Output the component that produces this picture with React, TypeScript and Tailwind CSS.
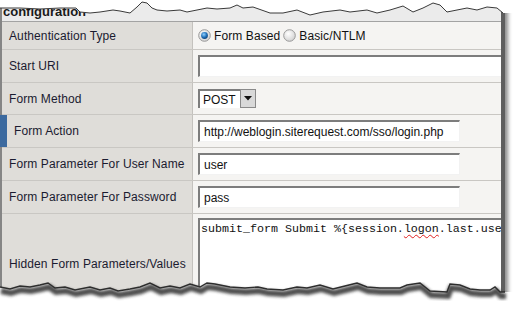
import React from "react";

const topPts: [number, number][] = [
  [0, 8], [20, 8], [40, 9], [60, 8], [76, 8], [80, 12], [90, 13], [100, 12], [113, 10], [120, 11], [130, 13], [137, 7], [142, 2], [147, 3], [152, 8], [157, 10], [167, 11], [180, 10], [187, 12], [197, 10], [207, 8], [217, 9], [230, 8], [237, 5], [243, 8], [253, 7],
  [270, 13], [283, 13], [297, 10], [310, 15], [323, 12], [340, 10], [350, 12], [367, 10], [377, 13], [390, 10], [403, 6], [413, 12], [423, 8], [433, 3], [440, 5], [447, 12], [457, 10], [467, 8], [477, 10], [487, 7], [497, 8], [503, 13], [510, 13], [518, 13],
];

const botPts: [number, number][] = [
  [0, 287], [10, 289], [20, 286], [30, 287], [40, 285], [48, 283], [55, 288], [65, 287], [75, 290], [90, 287], [100, 290], [110, 288], [118, 291], [130, 289], [140, 287], [150, 283], [160, 288], [170, 286], [180, 288], [190, 284], [200, 287], [207, 283], [215, 284], [230, 287], [245, 288], [258, 287],
  [267, 289], [283, 290], [297, 287], [307, 288], [320, 285], [333, 289], [345, 286], [357, 283], [367, 287], [380, 288], [400, 288], [407, 285], [420, 283], [430, 291], [447, 292], [450, 284], [460, 285], [470, 289], [480, 290], [490, 290], [495, 287], [500, 292], [505, 292],
];

const ptsStr = (p: [number, number][]) => p.map(([x, y]) => `${x},${y}`).join(" L");

function Radio({ checked }: { checked: boolean }) {
  return (
    <svg width="13" height="13" viewBox="0 0 13 13" className="shrink-0">
      <defs>
        <radialGradient id={checked ? "rgc" : "rgu"} cx="40%" cy="35%" r="70%">
          <stop offset="0%" stopColor="#ffffff" />
          <stop offset="100%" stopColor="#cfcfcf" />
        </radialGradient>
        <radialGradient id="rblue" cx="40%" cy="35%" r="70%">
          <stop offset="0%" stopColor="#8fd0ff" />
          <stop offset="60%" stopColor="#1f6fb8" />
          <stop offset="100%" stopColor="#0d3e74" />
        </radialGradient>
      </defs>
      <circle cx="6.5" cy="6.5" r="5.8" fill={`url(#${checked ? "rgc" : "rgu"})`} stroke="#9a9a9a" strokeWidth="1" />
      {checked && <circle cx="6.5" cy="6.5" r="3.4" fill="url(#rblue)" />}
    </svg>
  );
}

function Input({ value, wide }: { value: string; wide?: boolean }) {
  return (
    <div
      className={`h-[22px] ${wide ? "w-[340px] shrink-0" : "w-[262px]"} bg-white border-t-2 border-l-2 border-r border-b border-t-[#7d7d7d] border-l-[#7d7d7d] border-r-[#f2f2f2] border-b-[#f2f2f2] pl-[4px] flex items-center text-[12px] text-[#111] whitespace-nowrap`}
    >
      {value}
    </div>
  );
}

function Row({
  label,
  h,
  children,
  marked,
}: {
  label: string;
  h: string;
  children: React.ReactNode;
  marked?: boolean;
}) {
  return (
    <div className={`flex ${h} border-b border-[#c9c7c3]`}>
      <div
        className={`relative w-[191px] shrink-0 bg-[#dfddd9] border-r border-[#c4c2be] flex items-center ${marked ? "pl-[12px]" : "pl-[7px]"} text-[12px] tracking-[0.1px] text-[#1b1b30] whitespace-nowrap`}
      >
        {marked && <span className="absolute -left-[2px] top-0 bottom-0 w-[7px] bg-[#3c6a9f]" />}
        {label}
      </div>
      <div className="flex-1 bg-[#f5f4f2] flex items-center pl-[5px] overflow-hidden">{children}</div>
    </div>
  );
}

export default function App() {
  return (
    <div
      className="relative w-[518px] h-[315px] bg-white overflow-hidden"
      style={{ fontFamily: '"Liberation Sans", Arial, sans-serif' }}
    >
      <div className="w-[505px] h-[315px] border-l-2 border-r-4 border-l-[#858585] border-r-[#5e5e5e] shadow-[3px_2px_4px_rgba(0,0,0,0.45)] flex flex-col">
        <div className="h-[22px] shrink-0 bg-[#ebebeb] border-b border-[#a3a3a3] flex items-end pl-[1px] pb-[3px] text-[13px] font-bold leading-none text-[#1a1a1a]">
          configuration
        </div>
        <Row label="Authentication Type" h="h-[28px]">
          <div className="flex items-center text-[12px] tracking-[0.1px] text-[#111]">
            <Radio checked />
            <span className="ml-[3px]">Form Based</span>
            <span className="ml-[3px]"><Radio checked={false} /></span>
            <span className="ml-[3px]">Basic/NTLM</span>
          </div>
        </Row>
        <Row label="Start URI" h="h-[33px]">
          <Input value="" wide />
        </Row>
        <Row label="Form Method" h="h-[32px]">
          <div className="flex h-[19px] items-stretch">
            <div className="w-[42px] bg-white border-t-2 border-l-2 border-[#7d7d7d] pl-[3px] text-[12px] text-[#111] flex items-center">
              POST
            </div>
            <div className="w-[16px] bg-[#d9d9d9] border border-[#8a8a8a] flex items-center justify-center">
              <svg width="8" height="5" viewBox="0 0 8 5">
                <path d="M0 0 L8 0 L4 4.5 Z" fill="#111" />
              </svg>
            </div>
          </div>
        </Row>
        <Row label="Form Action" h="h-[33px]" marked>
          <Input value="http://weblogin.siterequest.com/sso/login.php" />
        </Row>
        <Row label="Form Parameter For User Name" h="h-[33px]">
          <Input value="user" />
        </Row>
        <Row label="Form Parameter For Password" h="h-[33px]">
          <Input value="pass" />
        </Row>
        <div className="flex h-[100px] shrink-0">
          <div className="w-[191px] shrink-0 bg-[#dfddd9] border-r border-[#c4c2be] flex items-center pl-[7px] text-[12px] tracking-[0.1px] text-[#1b1b30] whitespace-nowrap">
            Hidden Form Parameters/Values
          </div>
          <div className="flex-1 bg-[#f5f4f2] pl-[5px] pt-[4px] overflow-hidden">
            <div
              className="w-[340px] h-[90px] bg-white border-t-2 border-l-2 border-[#7d7d7d] pl-[1px] pt-[2px] text-[11.67px] leading-[14px] text-[#111] whitespace-nowrap overflow-hidden"
              style={{ fontFamily: '"Liberation Mono", "Courier New", monospace' }}
            >
              submit_form Submit %{"{"}session.
              <span className="underline decoration-wavy decoration-[#e02020] decoration-1 underline-offset-2">logon</span>
              .last.use
            </div>
          </div>
        </div>
      </div>

      <svg className="absolute left-0 top-0" width="518" height="315" viewBox="0 0 518 315">
        <defs>
          <filter id="blur" x="-5%" y="-50%" width="110%" height="200%">
            <feGaussianBlur stdDeviation="1.8" />
          </filter>
        </defs>
        <path d={`M0,0 L518,0 L518,13 L${ptsStr([...topPts].reverse())} Z`} fill="#ffffff" />
        <path d={`M${ptsStr(topPts.filter(([x]) => x <= 503))}`} fill="none" stroke="#3a3a3a" strokeWidth="1" />
        <path d={`M0,315 L518,315 L518,292 L${ptsStr([...botPts].reverse())} Z`} fill="#ffffff" />
        <path
          d={`M${ptsStr(botPts.map(([x, y]) => [x + 1, y + 4] as [number, number]))}`}
          fill="none"
          stroke="#444"
          strokeWidth="6"
          filter="url(#blur)"
          opacity="0.95"
        />
        <path d={`M${ptsStr(botPts)}`} fill="none" stroke="#2e2e2e" strokeWidth="1.4" />
      </svg>
    </div>
  );
}
